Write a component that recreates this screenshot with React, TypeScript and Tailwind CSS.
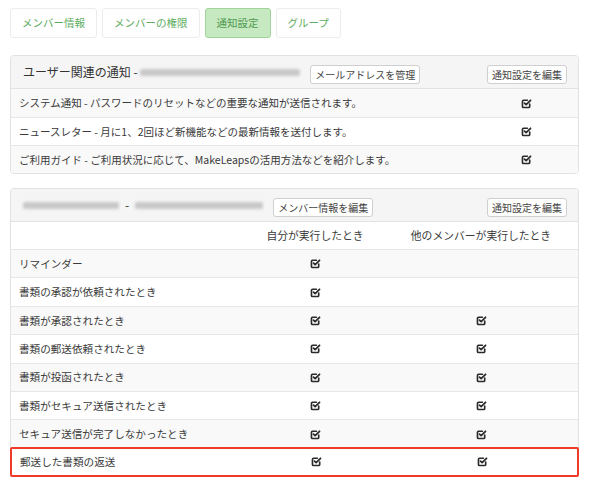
import React from "react";

const Check = () => (
  <svg width="11" height="11" viewBox="0 0 12 12" fill="none" className="inline-block">
    <path d="M9.5 6.5V9.2C9.5 9.9 9 10.4 8.3 10.4H2.8C2.1 10.4 1.6 9.9 1.6 9.2V3.7C1.6 3 2.1 2.5 2.8 2.5H7" stroke="#2b2b2b" strokeWidth="1.8" strokeLinecap="round" />
    <path d="M3.8 5.6L5.6 7.3L10.4 2.5" stroke="#2b2b2b" strokeWidth="1.9" strokeLinecap="round" strokeLinejoin="round" />
  </svg>
);

const Btn = ({ children }: { children: React.ReactNode }) => (
  <span className="inline-flex items-center h-[19px] px-[4px] border border-[#cfcfcf] rounded-[3px] bg-white text-[10px] text-[#444] leading-none">
    {children}
  </span>
);

const Blur = ({ w }: { w: number }) => (
  <span
    className="inline-block h-[7px] rounded-[2px] bg-[#c8c8c8] blur-[1.5px]"
    style={{ width: w }}
  />
);

const font = { fontFamily: '"Noto Sans CJK JP", "Noto Sans", sans-serif' };

export default function App() {
  const tabs = ["メンバー情報", "メンバーの権限", "通知設定", "グループ"];
  const rows2: [string, boolean, boolean][] = [
    ["リマインダー", true, false],
    ["書類の承認が依頼されたとき", true, false],
    ["書類が承認されたとき", true, true],
    ["書類の郵送依頼されたとき", true, true],
    ["書類が投函されたとき", true, true],
    ["書類がセキュア送信されたとき", true, true],
    ["セキュア送信が完了しなかったとき", true, true],
  ];
  return (
    <div className="w-[589px] h-[485px] bg-white text-[#3a3a3a] overflow-hidden" style={font}>
      <div className="flex gap-[5px] pl-[10px] pt-[8px]">
        {tabs.map((t, i) => (
          <div
            key={t}
            className={
              i === 2
                ? "h-[30px] px-[11px] flex items-center rounded-[3px] border border-[#9fd49a] bg-[#c7e9c1] text-[10.5px] text-[#4f9a4f]"
                : "h-[30px] px-[11px] flex items-center rounded-[3px] border border-[#ececec] bg-white text-[10.5px] text-[#5fae5f]"
            }
          >
            {t}
          </div>
        ))}
      </div>

      <div className="mx-[10px] mt-[17px] border border-[#e2e2e2] rounded-[4px] overflow-hidden">
        <div className="h-[33px] bg-[#f5f5f5] border-b border-[#e2e2e2] flex items-center pl-[12px] pr-[11px]">
          <span className="text-[12px] text-[#333]">ユーザー関連の通知 -&nbsp;</span>
          <Blur w={160} />
          <span className="ml-[10px]">
            <Btn>メールアドレスを管理</Btn>
          </span>
          <span className="ml-auto">
            <Btn>通知設定を編集</Btn>
          </span>
        </div>
        {[
          "システム通知 - パスワードのリセットなどの重要な通知が送信されます。",
          "ニュースレター - 月に1、2回ほど新機能などの最新情報を送付します。",
          "ご利用ガイド - ご利用状況に応じて、MakeLeapsの活用方法などを紹介します。",
        ].map((t, i) => (
          <div
            key={t}
            className={`h-[28px] flex items-center pl-[8px] text-[10.5px] ${i > 0 ? "border-t border-[#e6e6e6]" : ""} ${i % 2 === 0 ? "bg-[#f9f9f9]" : "bg-white"}`}
          >
            <span className="flex-1">{t}</span>
            <span className="w-[11px] flex mr-[46px]">
              <Check />
            </span>
          </div>
        ))}
      </div>

      <div className="mx-[10px] mt-[14px] border border-[#e2e2e2] rounded-t-[4px] border-b-0">
        <div className="h-[33px] bg-[#f5f5f5] border-b border-[#e2e2e2] flex items-center pl-[12px] pr-[11px]">
          <Blur w={96} />
          <span className="text-[12px] text-[#333] mx-[6px]">-</span>
          <Blur w={128} />
          <span className="ml-[10px]">
            <Btn>メンバー情報を編集</Btn>
          </span>
          <span className="ml-auto">
            <Btn>通知設定を編集</Btn>
          </span>
        </div>
        <div className="h-[27px] flex items-center text-[10.8px] bg-white">
          <span className="flex-1" />
          <span className="w-[166px] text-center">自分が実行したとき</span>
          <span className="w-[166px] text-center">他のメンバーが実行したとき</span>
          <span className="w-[14px]" />
        </div>
        {rows2.map(([t, a, b], i) => (
          <div
            key={t}
            className={`h-[28.4px] flex items-center pl-[8px] text-[10.6px] border-t border-[#e6e6e6] ${i % 2 === 0 ? "bg-[#f9f9f9]" : "bg-white"}`}
          >
            <span className="flex-1">{t}</span>
            <span className="w-[166px] flex justify-center">{a && <Check />}</span>
            <span className="w-[166px] flex justify-center">{b && <Check />}</span>
            <span className="w-[14px]" />
          </div>
        ))}
      </div>
      <div className="mx-[10px] -mt-px h-[30px] flex items-center pl-[8px] text-[10.6px] border-2 border-[#ef3a2a] rounded-[2px] bg-white">
        <span className="flex-1">郵送した書類の返送</span>
        <span className="w-[166px] flex justify-center">
          <Check />
        </span>
        <span className="w-[166px] flex justify-center">
          <Check />
        </span>
        <span className="w-[12px]" />
      </div>
    </div>
  );
}
